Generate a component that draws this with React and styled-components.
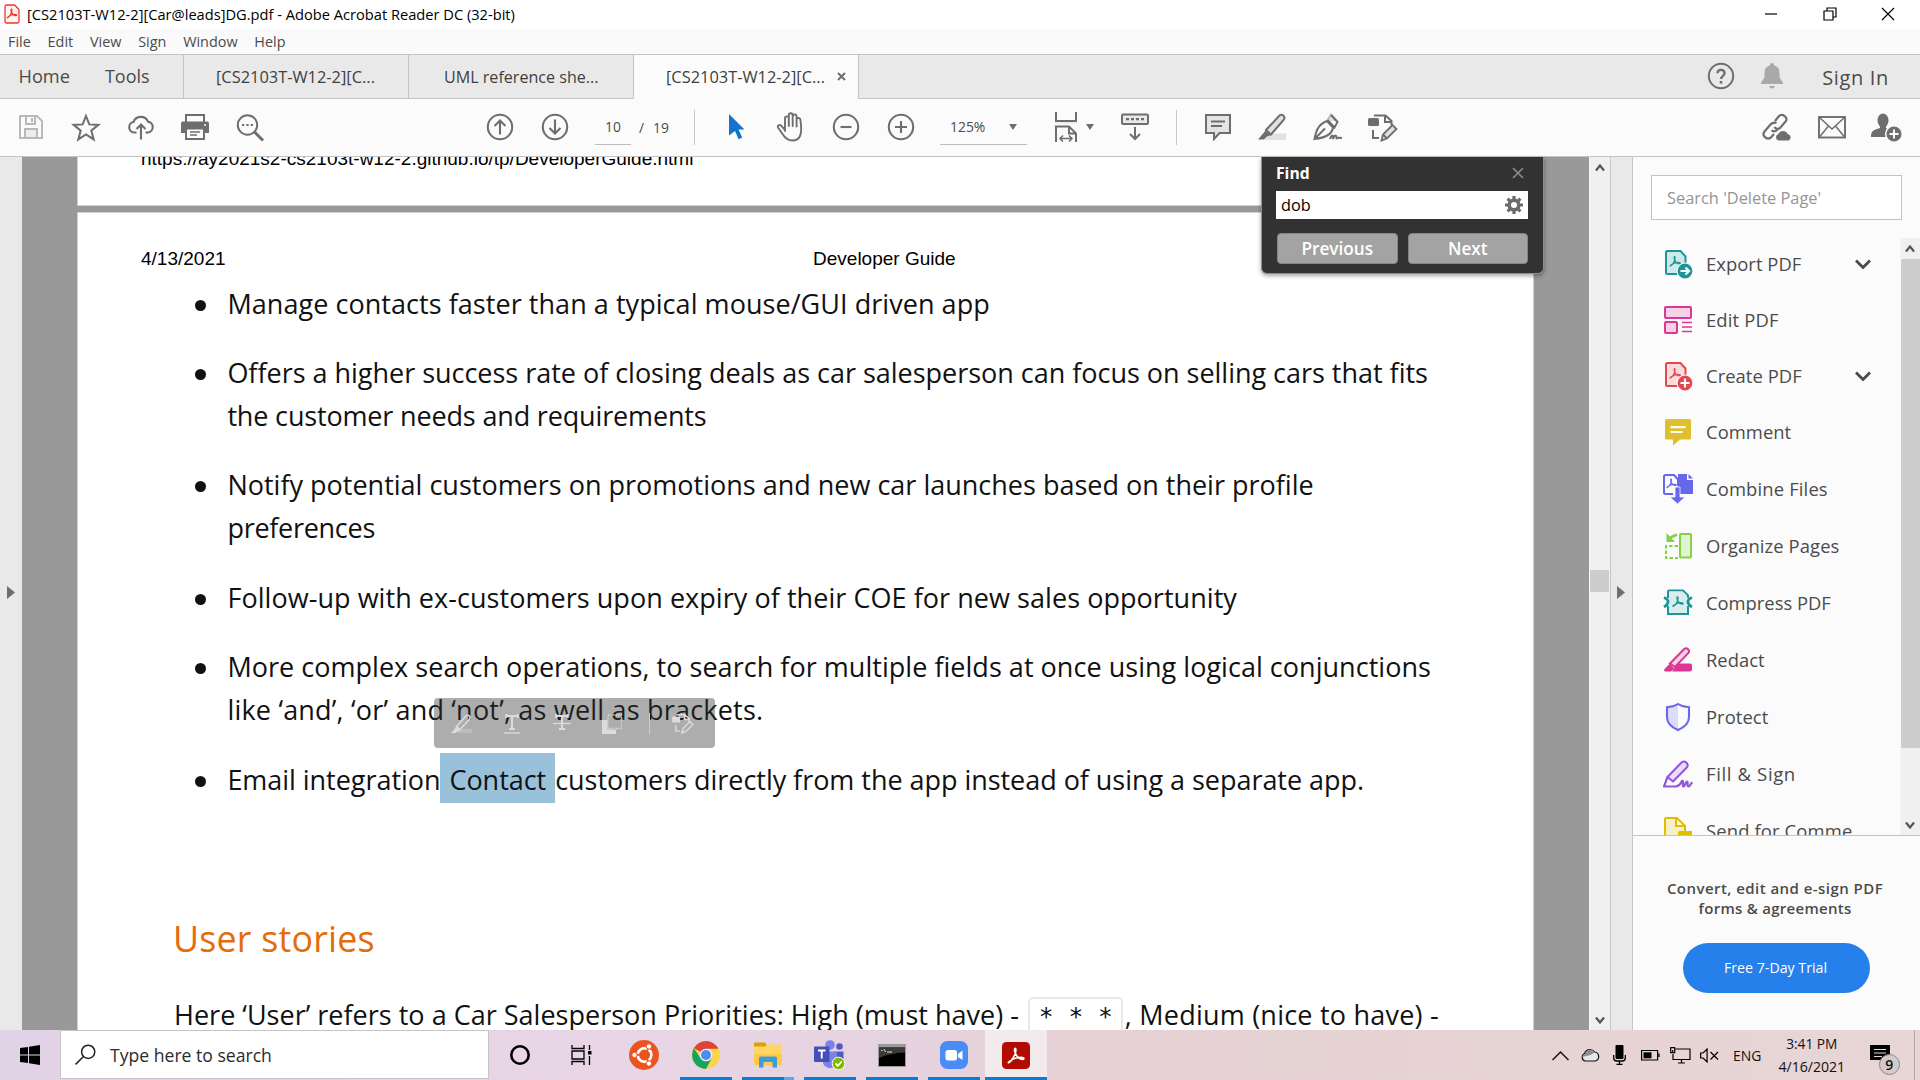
import React from "react";
import styled, { createGlobalStyle } from "styled-components";

const GlobalStyle = createGlobalStyle`
  *, *::before, *::after { box-sizing: border-box; }
  body { margin: 0; overflow: hidden; background: #fff; font-family: "Open Sans", "Noto Sans", sans-serif; color: #4b4b4b; }
  svg { display: block; flex: none; }
`;

const ink = "#6e6e6e";

const Screen = styled.div`
  width: 1920px;
  height: 1080px;
  display: flex;
  flex-direction: column;
  overflow: hidden;
`;

const Label = styled.span`
  font-size: ${(p) => p.$size}px;
  letter-spacing: ${(p) => p.$ls || 0}px;
  font-weight: ${(p) => p.$weight || 400};
  white-space: pre;
`;

/* ---------- title bar + menus ---------- */
const TitleBar = styled.header`
  height: 29px;
  flex: none;
  display: flex;
  align-items: center;
  padding: 0 25px 2px 4px;
  gap: 7px;
  background: #fff;
  color: #000;
`;
const WindowButtons = styled.div`
  margin-left: auto;
  display: flex;
  gap: 44.4px;
`;
const MenuBar = styled.nav`
  height: 26px;
  flex: none;
  display: flex;
  align-items: center;
  gap: 16.8px;
  padding: 1px 0 0 8px;
  background: #fafafa;
  border-bottom: 1px solid #c3c3c3;
  line-height: 20px;
`;

/* ---------- tabs ---------- */
const TabBar = styled.div`
  height: 44px;
  flex: none;
  display: flex;
  background: #e9e9e9;
`;
const HomeTabs = styled.div`
  width: 183px;
  display: flex;
  align-items: center;
  gap: 35px;
  padding: 0 0 2px 18.5px;
  border-bottom: 1px solid #c3c3c3;
`;
const Tab = styled.div`
  width: 225px;
  display: flex;
  align-items: center;
  padding-left: ${(p) => p.$pad}px;
  gap: 12px;
  color: #3f3f3f;
  border-left: 1px solid #c3c3c3;
  border-bottom: 1px solid ${(p) => (p.$active ? "#fbfbfb" : "#c3c3c3")};
  background: ${(p) => (p.$active ? "#fbfbfb" : "transparent")};
`;
const TabRest = styled.div`
  flex: 1;
  display: flex;
  align-items: center;
  justify-content: flex-end;
  padding-right: 31px;
  border-left: 1px solid #c3c3c3;
  border-bottom: 1px solid #c3c3c3;
  & > span { padding-top: 2px; }
`;
const AccountTools = styled.div`
  display: flex;
  align-items: center;
  gap: 26px;
  margin-right: 39px;
  padding-bottom: 1px;
`;

/* ---------- toolbar ---------- */
const Toolbar = styled.div`
  height: 58px;
  flex: none;
  display: flex;
  align-items: center;
  padding: 0 6px 1px 3px;
  background: #fbfbfb;
  border-bottom: 1px solid #c3c3c3;
`;
const ToolGroup = styled.div`
  display: flex;
  margin-left: ${(p) => p.$gap || 0}px;
`;
const Slot = styled.div`
  width: ${(p) => p.$w || 55}px;
  height: 34px;
  display: flex;
  align-items: center;
  justify-content: center;
`;
const Field = styled.div`
  width: ${(p) => p.$w}px;
  height: 36px;
  margin-left: ${(p) => p.$gap}px;
  padding: 0 ${(p) => p.$pad}px;
  display: flex;
  align-items: center;
  justify-content: space-between;
  border-bottom: 1px solid #bdbdbd;
`;
const PageTotal = styled.div`
  width: 63px;
  padding-left: 8px;
  display: flex;
  gap: 9px;
`;
const Divider = styled.div`
  width: 1px;
  height: 35px;
  background: #c8c8c8;
`;
const Spring = styled.div`
  flex: 1;
`;

/* ---------- workspace ---------- */
const Workspace = styled.main`
  height: 873px;
  flex: none;
  display: flex;
  position: relative;
`;
const Rail = styled.div`
  width: ${(p) => p.$w}px;
  flex: none;
  display: flex;
  align-items: center;
  padding: 0 0 2px ${(p) => p.$pad}px;
  background: #e9e9e9;
  border-left: ${(p) => (p.$line ? "1px solid #c6c6c6" : "0")};
`;
const Canvas = styled.section`
  width: 1567px;
  flex: none;
  overflow: hidden;
  padding: 0 55px;
  background: #999;
  display: flex;
  flex-direction: column;
  gap: 6px;
`;
const Sheet = styled.article`
  height: ${(p) => p.$h}px;
  flex: none;
  background: #fff;
  border: solid #cfcfcf;
  border-width: ${(p) => (p.$last ? "0 1px 1px 1px" : "1px 1px 0 1px")};
  color: #111;
  overflow: hidden;
`;
const PrintLine = styled.div`
  font: 19px "Liberation Sans", Arial, sans-serif;
  color: #000;
  line-height: 22px;
  display: flex;
  white-space: pre;
`;
const UrlLine = styled(PrintLine)`
  margin: -9px 0 0 63px;
`;
const DateLine = styled(PrintLine)`
  margin: 35px 0 0 63px;
  gap: 587.5px;
`;
const Bullets = styled.ul`
  list-style: none;
  margin: 12.5px 0 0 116px;
  padding: 0;
  display: flex;
  flex-direction: column;
  gap: 26.9px;
  font-size: 27px;
  line-height: 42.7px;
`;
const Bullet = styled.li`
  display: flex;
  &::before {
    content: "";
    width: 11px;
    height: 11px;
    flex: none;
    margin: 17px 21.4px 0 1px;
    border-radius: 50%;
    background: #111;
  }
`;
const Line = styled.div`
  white-space: pre;
  letter-spacing: ${(p) => p.$ls || 0}px;
`;
const Selected = styled.span`
  background: #99c1da;
  padding: 7.6px 2px 5.6px;
`;
const Heading = styled.h2`
  margin: 112px 0 0 95px;
  font-size: 35.8px;
  font-weight: 400;
  line-height: 50px;
  letter-spacing: 0.2px;
  color: #e46c0a;
`;
const Story = styled.div`
  margin: 30.5px 0 0 96px;
  display: flex;
  font-size: 27px;
  line-height: 42.7px;
`;
const Code = styled.code`
  width: 95px;
  height: 42px;
  margin: 3px 1.5px 0 9.5px;
  flex: none;
  display: flex;
  justify-content: center;
  border: 2px solid #e8e8e8;
  border-radius: 5px;
  font: 24.6px/36px "DejaVu Sans Mono", monospace;
  white-space: pre;
`;

const SelectionBar = styled.div`
  position: absolute;
  left: 434px;
  top: 541px;
  width: 281px;
  height: 50px;
  border-radius: 4px;
  background: rgba(50, 50, 50, 0.4);
  display: grid;
  grid-template-columns: 52px 50px 49px 47px 23px 22px;
  align-items: center;
  padding: 1px 0 0 17px;
`;

const FindBox = styled.div`
  position: absolute;
  left: 1261px;
  top: 0;
  width: 283px;
  height: 117px;
  padding: 0 15px 0 14px;
  background: #323232;
  border: solid #8f8f8f;
  border-width: 0 1px 1px;
  border-radius: 0 0 6px 6px;
  box-shadow: 0 2px 4px rgba(0, 0, 0, 0.35);
  color: #fff;
`;
const FindHead = styled.div`
  height: 34px;
  padding: 0 4px 2px 0;
  display: flex;
  align-items: center;
  justify-content: space-between;
`;
const FindInput = styled.div`
  height: 28px;
  padding: 0 5px;
  display: flex;
  align-items: center;
  justify-content: space-between;
  background: #fff;
  color: #000;
`;
const FindActions = styled.div`
  margin: 14px 0 0 1px;
  display: flex;
  gap: 10px;
`;
const FindButton = styled.button`
  flex: 1;
  height: 31px;
  padding: 0 0 1px;
  border: 1px solid #858585;
  border-radius: 4px;
  background: #a3a3a3;
  color: #fff;
  font: 600 17.2px "Open Sans", sans-serif;
`;

const ScrollTrack = styled.div`
  width: ${(p) => p.$w}px;
  flex: none;
  background: #f0f0f0;
  display: flex;
  flex-direction: column;
  align-items: center;
  padding-right: 1px;
  border-left: 1px solid #f8f8f8;
`;
const Arrow = styled.div`
  height: 21px;
  display: flex;
  align-items: center;
`;
const Thumb = styled.div`
  width: 19px;
  height: ${(p) => p.$h}px;
  margin: ${(p) => p.$top}px 0 auto;
  background: #cdcdcd;
`;

/* ---------- tools panel ---------- */
const Panel = styled.aside`
  flex: 1;
  display: flex;
  flex-direction: column;
  background: #fbfbfb;
  border-left: 1px solid #c6c6c6;
`;
const SearchTools = styled.div`
  width: 251px;
  height: 45px;
  flex: none;
  margin: 18px 0 18px 18px;
  padding: 0 0 1px 15px;
  display: flex;
  align-items: center;
  background: #fff;
  border: 1px solid #c3c3c3;
  color: #959595;
`;
const ToolArea = styled.div`
  height: 598px;
  flex: none;
  display: flex;
  justify-content: space-between;
  overflow: hidden;
  border-bottom: 1px solid #c3c3c3;
`;
const ToolList = styled.div`
  padding-left: 18px;
`;
const ToolRow = styled.div`
  width: 230px;
  height: 51px;
  margin-bottom: ${(p) => p.$after}px;
  padding: 0 10px 0 12px;
  display: flex;
  align-items: center;
  gap: 13px;
  background: ${(p) => (p.$open ? "#fcfcfc" : "transparent")};
  & > :nth-child(3) { margin-left: auto; }
`;
const IconBox = styled.div`
  width: 30px;
  display: flex;
  justify-content: center;
`;
const Promo = styled.div`
  flex: 1;
  display: flex;
  flex-direction: column;
  align-items: center;
  padding: 42px 3px 0 0;
  line-height: 20.4px;
`;
const TrialButton = styled.button`
  width: 187px;
  height: 50px;
  margin: 24px -3px 0 0;
  padding: 0 2px 0 0;
  border: 0;
  border-radius: 25px;
  background: #2680eb;
  color: #fff;
  font: 14.2px "Open Sans", sans-serif;
`;

/* ---------- taskbar ---------- */
const Taskbar = styled.footer`
  height: 50px;
  flex: none;
  display: flex;
  color: #111;
  background: linear-gradient(90deg, #e1d2e5 0%, #e8d6e7 30%, #e6d3e0 47%, #e5d1d3 56%, #e8d5d5 100%);
`;
const Start = styled.div`
  width: 60px;
  display: flex;
  align-items: center;
  justify-content: center;
`;
const SearchBox = styled.div`
  width: 429px;
  height: 49px;
  margin-top: 0;
  padding-left: 14px;
  display: flex;
  align-items: center;
  gap: 14px;
  background: #fff;
  border: 1px solid #c5c5c5;
  color: #2b2b2b;
`;
const TaskItem = styled.div`
  width: 62px;
  display: flex;
  align-items: center;
  justify-content: center;
  position: relative;
  background: ${(p) => (p.$active ? "#f3eaee" : "transparent")};
  &::after {
    content: "";
    position: absolute;
    left: ${(p) => (p.$active ? 0 : 5)}px;
    bottom: 0;
    width: ${(p) => (p.$active ? 62 : 52)}px;
    height: ${(p) => (p.$run ? 3 : 0)}px;
    background: ${(p) => (p.$multi ? "linear-gradient(90deg,#0a7bd6 0 80%,#5aa9e2 80%)" : "#0a7bd6")};
  }
`;
const Tray = styled.div`
  margin-left: auto;
  width: 368px;
  display: flex;
  align-items: center;
`;
const TrayIcon = styled.div`
  width: ${(p) => p.$w}px;
  display: flex;
  justify-content: center;
`;
const Clock = styled.div`
  width: 72px;
  margin-left: 14.5px;
  display: flex;
  flex-direction: column;
  align-items: center;
  line-height: 23px;
  padding-bottom: 1px;
`;
const Notice = styled.div`
  width: 32px;
  height: 50px;
  margin-left: 22px;
  padding: 15px 0 0 0;
  position: relative;
`;
const Badge = styled.span`
  position: absolute;
  left: 9px;
  top: 24px;
  width: 21px;
  height: 21px;
  border-radius: 50%;
  border: 1px solid #8d8686;
  background: #d3cbcb;
  display: flex;
  align-items: center;
  justify-content: center;
  font-size: 14px;
  font-weight: 600;
  line-height: 1;
`;
const ShowDesktop = styled.div`
  width: 1px;
  height: 50px;
  margin: 0 5px 0 auto;
  background: #b3a5a6;
`;

/* ---------- icons ---------- */
const Svg = ({ w, h, c = ink, sw = 2, children, ...rest }) => (
  <svg width={w} height={h} viewBox={`0 0 ${w} ${h}`} fill="none" stroke={c} strokeWidth={sw} {...rest}>
    {children}
  </svg>
);

const trefoil =
  "M1 13.2C3.5 12 6.300 7.200 7.100 3.800 7.500 2 7.300 .8 6.700 .8 6 .8 5.900 2.400 6.500 4.200 7.600 7.500 10.300 10 13 10.300 14.600 10.400 14.700 9 13.200 8.700 9.500 8.200 4.500 9.900 1.800 12 .8 12.900 .4 13.500 1 13.200Z";

const Chevron = ({ w = 11, h = 8, sw = 2.2, up, c = "#555" }) => (
  <Svg w={w} h={h} sw={sw} c={c}>
    <path d={up ? `M1 ${h - 1.5}L${w / 2} 1.500L${w - 1} ${h - 1.5}` : `M1 1.500L${w / 2} ${h - 1.5}L${w - 1} 1.500`} />
  </Svg>
);
const Caret = () => (
  <Svg w={8} h={6} stroke="none"><path d="M0 0h8l-4 6z" fill={ink} /></Svg>
);

const AppMark = () => (
  <Svg w={16} h={20} c="#e8382f" sw={1.3}>
    <path d="M2.500 1h8L15 5.500V17.500Q15 19 13.500 19h-11Q1 19 1 17.500V2.500Q1 1 2.500 1Z" fill="#fff3f2" />
    <g transform="translate(2.800 4.500) scale(.7)"><path d={trefoil} strokeWidth="1.800" /></g>
  </Svg>
);

const Save = () => (
  <Svg w={26} h={26} c="#b9b9b9">
    <path d="M2 2h17l5 5v17H2zM8 2v8h9V2M14 4v4M7 24v-9h12v9" fill="none" />
    <path d="M8 16h10v7H8z" fill="#ececec" stroke="none" />
  </Svg>
);
const Star = () => (
  <Svg w={30} h={29}><path d="M15 3l3.300 8.400 9 .5-7 5.700 2.400 8.800L15 21.500l-7.700 4.900 2.400-8.800-7-5.700 9-.5z" /></Svg>
);
const CloudUp = () => (
  <Svg w={28} h={28} sw={2.1}>
    <path d="M9.500 19.500H7.200A5.300 5.300 0 0 1 6.500 9 7.800 7.800 0 0 1 21 8.600a5.500 5.500 0 0 1 0 10.900h-2.500M14 26.500V12M9.500 16L14 11.500 18.500 16" />
  </Svg>
);
const Printer = () => (
  <Svg w={28} h={28}>
    <path d="M5 9V2h18v7" />
    <path d="M2 8.500h24a2 2 0 0 1 2 2V20h-4v-3H4v3H0v-9.500a2 2 0 0 1 2-2z" fill={ink} stroke="none" />
    <path d="M5 15.500h18V26H5z" fill="#fbfbfb" />
    <path d="M9 19h10M9 22h7" strokeWidth="1.500" />
    <circle cx="24" cy="12" r="1" fill="#fff" stroke="none" />
  </Svg>
);
const FindIcon = () => (
  <Svg w={29} h={29}>
    <circle cx="11.500" cy="12" r="9.700" /><path d="M18.500 19L27 27.500" strokeWidth="3" />
    <path d="M6 12h2.200M10.400 12h2.200M14.800 12H17" strokeWidth="2.200" />
  </Svg>
);
const Circle = ({ d }) => (
  <Svg w={28} h={28} sw={2.1}><circle cx="14" cy="14" r="12.200" /><path d={d} /></Svg>
);
const Cursor = () => (
  <Svg w={17} h={26} stroke="none"><path d="M1 0L16.500 15.500H10.500L14.200 23.500 10.600 25.300 7 17 1 21.500Z" fill="#1473cc" /></Svg>
);
const Hand = () => (
  <Svg w={30} h={30} sw={1.900} strokeLinecap="round" strokeLinejoin="round">
    <path d="M9 19V6.300a1.900 1.900 0 0 1 3.800 0V14M12.800 6V3.200a1.900 1.900 0 0 1 3.900 0V14M16.700 4.500a1.900 1.900 0 0 1 3.900 0V14.500M20.600 8a1.900 1.900 0 0 1 3.800-.3C25 14 26.300 18.500 24 24 22.500 27.300 20 28.500 16.500 28.500 11.500 28.500 9 26 6.500 22L2.200 15.800C1 13.600 3.500 12 5.400 13.800L9 18" />
  </Svg>
);
const FitPage = () => (
  <Svg w={22} h={30} sw={2}>
    <path d="M1 0v9h20V0" />
    <path d="M0 11h22" stroke="#e1e1e1" strokeWidth="1" />
    <path d="M1 30V14.500h13l7 7V30M14 14.500v7h7" />
    <path d="M5 26.500h12M8 23.500l-3 3 3 3M14 23.500l3 3-3 3" strokeWidth="1.500" />
  </Svg>
);
const Keyboard = () => (
  <Svg w={28} h={28}>
    <rect x="1" y="1.500" width="26" height="9.500" rx="1" fill="#e9e9e9" />
    <path d="M5 6.200h3M10 6.200h3M15 6.200h3M20 6.200h3" strokeWidth="2.200" />
    <path d="M14 14v12M9 21l5 5 5-5" />
  </Svg>
);
const Note = () => (
  <Svg w={28} h={28}><path d="M2 2h24v18H15.500L10 26v-6H2z" fill="#e4e4e4" /><path d="M7 8.500h14M7 13h11" strokeWidth="1.800" /></Svg>
);
const Marker = ({ c = ink, f = "#e1e1e1" }) => (
  <Svg w={29} h={28} c={c}>
    <path d="M11 20.500h17V27H7z" fill={f} stroke="none" />
    <path d="M8 17L21.500 2.500q2-1.500 4 .2 1.800 1.800.3 4L13 21.500z" fill={f} />
    <path d="M7.500 17.500l5.500 4.500-4 1.500-3 3H0L5.500 20z" fill={c} stroke="none" />
  </Svg>
);
const Pen = () => (
  <Svg w={30} h={28} sw={2}>
    <path d="M14 8l4-6.500L24 8" fill="#e1e1e1" stroke="#bdbdbd" />
    <path d="M1.500 26C3 19 4 12 14 8l6 6.500C19 22 11 25 1.500 26zM2 25.500L12 15.500M14.500 7l7 7.500 3-5.500L18 2" />
    <path d="M17 26c2-5 3.500-4 3 0 2-5 4-4 3.500 0 1.500-2.500 2.500-1 5.500-1" />
  </Svg>
);
const Stamp = ({ c = ink, f = "#e1e1e1" }) => (
  <Svg w={30} h={29} c={c}>
    <path d="M6 2.500h11.500l6 5.500v4M17 2.500V9h6" />
    <rect x="0" y="5" width="11" height="8" rx="1.500" fill={c} stroke="none" />
    <path d="M5 17v8h6" />
    <path d="M13.500 27.500l1.500-6L24.500 12l4 4L19 25.500zM15 21.500l4 4" fill={f} strokeWidth="1.800" />
  </Svg>
);
const LinkCloud = () => (
  <Svg w={30} h={29} sw={2.2}>
    <path d="M13 8l4-5c3-3 9 1 7 5l-5.500 6.500c-2 2.200-5 1.500-6-.5M14.500 10c-3-1-4.500 0-6 1.500L2.500 18.500c-3 4 2 9 6.500 6l3-3.500M9.500 17.500c3 1.500 5 .5 6-1" />
    <path d="M16 28a4 4 0 0 1 0-7.500 5.500 5.500 0 0 1 10 0A4 4 0 0 1 27 28z" fill={ink} stroke="#fbfbfb" strokeWidth="1.200" />
  </Svg>
);
const Mail = () => (
  <Svg w={28} h={23} sw={1.900}><rect x="1" y="1" width="26" height="20.500" /><path d="M1.500 1.500L14 13 26.500 1.500M1.500 21L10.500 10M26.500 21L17.500 10" strokeWidth="1.500" /></Svg>
);
const UserAdd = () => (
  <Svg w={31} h={29} stroke="none">
    <ellipse cx="12" cy="7.500" rx="5.500" ry="7" fill={ink} />
    <path d="M9 11h6v4c3 1.200 6 2 6 4l-2 5H0c0-6 2-7 9-9z" fill={ink} />
    <circle cx="23" cy="21" r="8.300" fill={ink} stroke="#fbfbfb" strokeWidth="1.500" />
    <path d="M23 16.500v9M18.500 21h9" stroke="#fff" strokeWidth="1.900" />
  </Svg>
);
const Help = () => (
  <Svg w={28} h={28}><circle cx="14" cy="14" r="12.200" />
    <path d="M10.500 11.200c0-4.500 7-4.500 7 0 0 2.500-3.400 2.800-3.400 5.800" strokeWidth="2.300" /><path d="M14 19v2.600" strokeWidth="2.500" /></Svg>
);
const Bell = () => (
  <Svg w={22} h={26} stroke="none"><path d="M11 0q2 0 2.200 2.400C19 4 18.500 9 18.500 13c.3 4 3.500 4.500 3.500 8H0c0-3.500 3.200-4 3.500-8 0-4-.5-9 5.300-10.600Q9 0 11 0zM8 23h6q-1 2.500-3 2.500T8 23z" fill="#a9a9a9" /></Svg>
);
const Gear = () => (
  <Svg w={18} h={18} c="#6b6b6b">
    <circle cx="9" cy="9" r="4.800" strokeWidth="3.600" />
    <path d="M9 0v3M9 15v3M0 9h3M15 9h3M2.600 2.600l2.200 2.200M13.200 13.200l2.200 2.200M2.600 15.400l2.200-2.200M13.200 4.800l2.200-2.200" strokeWidth="3.200" />
  </Svg>
);
const Cross = ({ s = 10, sw = 2, c = ink }) => (
  <Svg w={s} h={s} sw={sw} c={c}><path d={`M1 1L${s - 1} ${s - 1}M${s - 1} 1L1 ${s - 1}`} /></Svg>
);

const PdfDoc = ({ c, f, mark }) => (
  <Svg w={30} h={30} c={c}>
    <path d="M4.500 2h13l5 5.500V25h-18Q3 25 3 23.500v-20Q3 2 4.500 2Z" fill={f} />
    <g transform="translate(6.500 7) scale(.76)"><path d={trefoil} strokeWidth="1.700" /></g>
    <circle cx="22" cy="22" r="8" fill={c} stroke="#fbfbfb" strokeWidth="1.200" />
    <path d={mark} stroke="#fff" strokeWidth="2.200" />
  </Svg>
);
const icons = {
  export: <PdfDoc c="#1b959a" f="#cfe8e9" mark="M17.500 22h7.500M22.500 18.500L26 22l-3.500 3.500" />,
  edit: (
    <Svg w={28} h={28} c="#dc3593">
      <rect x="1" y="1" width="26" height="11" rx="1" fill="#f5d2e6" /><rect x="1" y="16" width="12" height="11" rx="1" fill="#f5d2e6" />
      <path d="M18 16.500h10M18 21h10M18 25.500h10" strokeWidth="1.300" />
    </Svg>
  ),
  create: <PdfDoc c="#e34850" f="#f9dcdf" mark="M17.500 22h9M22 17.500v9" />,
  comment: (
    <Svg w={26} h={28} stroke="none">
      <path d="M2 1h22q2 0 2 2v17q0 1.500-2 1.500H15L8 27.500v-6H2q-2 0-2-1.500V3q0-2 2-2z" fill="#dfbf2b" />
      <path d="M5.500 9.200h15M5.500 14h12" stroke="#fff" strokeWidth="2.200" />
    </Svg>
  ),
  combine: (
    <Svg w={30} h={30} c="#6767ec">
      <path d="M15 0h9v6h6v14H15z" fill="#6767ec" stroke="none" /><path d="M25.500 0l4.500 4.500h-4.500z" fill="#6767ec" stroke="none" />
      <path d="M10 20H2.500Q1 20 1 18.500v-16Q1 1 2.500 1H11l4 4.500V12" fill="#fbfbfb" />
      <g transform="translate(3.500 4.500) scale(.68)"><path d={trefoil} strokeWidth="1.800" /></g>
      <path d="M12 13h5v10h5l-7.500 7L7 23h5z" fill="#6767ec" stroke="#fbfbfb" strokeWidth=".8" />
    </Svg>
  ),
  organize: (
    <Svg w={28} h={27} c="#83d241">
      <rect x="16" y="2" width="11" height="23.500" rx="1" fill="#e1f3d0" />
      <path d="M14 14H2v12h12" strokeDasharray="3.500 2" /><path d="M13 2.500L6.500 5.500" strokeWidth="2.800" /><path d="M2.500 1v9H11z" fill="#83d241" stroke="none" />
    </Svg>
  ),
  compress: (
    <Svg w={30} h={27} c="#1b959a">
      <path d="M5 9V2.500Q5 1.500 6 1.500h14l5 5V9M5 17v8h20v-8" fill="none" /><path d="M6 2.500h13.500L24 7v17H6z" fill="#d9edee" stroke="none" />
      <g transform="translate(9.500 7.500) scale(.74)"><path d={trefoil} strokeWidth="2" /></g>
      <path d="M1 8.500q4.500 2 4 4.700Q4.500 16 1 18M29 8.500q-4.500 2-4 4.700.500 2.800 4 4.800" strokeWidth="2.800" />
    </Svg>
  ),
  redact: (
    <Svg w={28} h={25} c="#dc3593">
      <path d="M14 16.500h12q2 0 2 1.500v4.500q0 2-2 2H8z" fill="#dc3593" stroke="none" />
      <path d="M6 16.500L20 2.200q2-1.800 4 0t.2 4L11 20z" fill="#f5d2e6" />
      <path d="M5.500 17l5 4.500-3.500 3H1.500Q-.5 24.500.5 22z" fill="#dc3593" stroke="none" />
    </Svg>
  ),
  protect: (
    <Svg w={26} h={30} c="#6767ec" sw={2.1}>
      <path d="M13 3v24C6 24 3 20 3 14V5.500C7 5.500 10 4.500 13 3z" fill="#dcdcf9" stroke="none" />
      <path d="M13 2c3 2 6.500 3 11 3.200V15c0 6-4 10-11 13C6 25 2 21 2 15V5.200C6.500 5 10 4 13 2z" />
    </Svg>
  ),
  sign: (
    <Svg w={30} h={28} c="#9256d9" strokeLinejoin="round">
      <path d="M4.500 17L18.500 2.500q2.500-2 5 .2 2.300 2.500.3 4.800L10 21.500z" fill="#e8dcf6" />
      <path d="M4.500 17L1 26.500h12c5-1 4.500-4 6-5.500 2-1.500 0 5.500 1.500 5.500s2-5 3.500-5-.5 5 1.500 5 1.500-3 4-4" strokeWidth="2.200" />
    </Svg>
  ),
  send: (
    <Svg w={28} h={30} c="#dfbf00">
      <path d="M2 2h11l8 8v18H1V3Q1 2 2 2zM12 2v8h8" fill="#f6efc9" /><path d="M16 15h12v12H14V17q0-2 2-2z" fill="#dfbf00" stroke="none" /><path d="M19 20h7" stroke="#fff" />
    </Svg>
  ),
};

const tools = [
  ["export", "Export PDF", 18.4, 0.05, 5, true],
  ["edit", "Edit PDF", 18.4, 0.15, 5],
  ["create", "Create PDF", 18.4, 0.05, 5, true],
  ["comment", "Comment", 18.4, 0.05, 6],
  ["combine", "Combine Files", 18.4, 0.15, 6],
  ["organize", "Organize Pages", 18.4, 0.1, 6],
  ["compress", "Compress PDF", 18.4, -0.02, 6],
  ["redact", "Redact", 18.4, 0, 6],
  ["protect", "Protect", 18.4, 0.05, 6],
  ["sign", "Fill & Sign", 18.6, 0.6, 6],
  ["send", "Send for Comme", 18.4, 0.15, 6],
];

/* ---------- taskbar art ---------- */
const Windows = () => (
  <Svg w={20} h={20} stroke="none"><path d="M0 3l8-1v7.500H0zM9 1.800L20 0v9.500H9zM0 10.500h8V18l-8-1zM9 10.500h11V20L9 18.200z" fill="#000" /></Svg>
);
const Lens = () => (
  <Svg w={21} h={21} c="#222" sw={1.500}><circle cx="13.200" cy="7.800" r="6.600" /><path d="M8.500 12.500L.6 20.400" /></Svg>
);
const Ring = () => <Svg w={22} h={22} c="#000" sw={2.600}><circle cx="11" cy="11" r="8.700" /></Svg>;
const TaskView = () => (
  <Svg w={22} h={20} c="#000" sw={1.300}><path d="M1 0v3.500h12V0M1 6h12v8H1zM1 20v-3.500h12V20M18.500 0v5M18.500 11v9" /><path d="M17 6h3.500v3.500H17z" fill="#000" stroke="none" /></Svg>
);
const Ubuntu = () => (
  <Svg w={30} h={30} c="#fff" sw={2.700}>
    <circle cx="15" cy="15" r="15" fill="#e95420" stroke="none" /><circle cx="15.500" cy="15" r="6.800" strokeDasharray="12.200 2" strokeDashoffset="-1" transform="rotate(-60 15.500 15)" />
    <g fill="#fff" stroke="#e95420" strokeWidth="1"><circle cx="5.500" cy="15" r="2.700" /><circle cx="20" cy="6.500" r="2.700" /><circle cx="20" cy="23.500" r="2.700" /></g>
  </Svg>
);
const Chrome = () => (
  <Svg w={28} h={28} stroke="none">
    <circle cx="14" cy="14" r="14" fill="#fdd34b" />
    <path d="M14 14L1.900 7A14 14 0 0 1 26.100 7L26.100 7.800H14z" fill="#db4437" />
    <path d="M1.900 7A14 14 0 0 0 14 28l5.500-10.500L14 14 8.500 17.200z" fill="#1aa260" />
    <circle cx="14" cy="14" r="6.300" fill="#f1f1f1" /><circle cx="14" cy="14" r="5" fill="#4c8bf5" />
  </Svg>
);
const Folder = () => (
  <Svg w={28} h={26} stroke="none">
    <path d="M0 1.500Q0 .5 1 .5h10l2 3-3 3H0z" fill="#e0a000" /><path d="M0 4.500h11l2-2h14.500V22H0z" fill="#ffd566" /><path d="M0 12h28v11H0z" fill="#ffcb45" />
    <path d="M5 25.500V16q0-1.500 1.500-1.500h15q1.500 0 1.500 1.500v9.500h-4.500V20h-9v5.500z" fill="#3f9bdc" />
  </Svg>
);
const Teams = () => (
  <Svg w={32} h={30} stroke="none">
    <circle cx="16" cy="5" r="4.800" fill="#7b83eb" /><circle cx="25.500" cy="6.500" r="3.300" fill="#5059c9" />
    <path d="M20 11.500h9.500v9q-2 5-8 3z" fill="#5059c9" /><path d="M9 11.500h14v11q-2 6-8 5.500-5-1-6-5z" fill="#7b83eb" />
    <rect x="0" y="6.500" width="15.500" height="15.500" rx="1" fill="#464eb8" /><path d="M4 10.500h7.500M7.750 10.500v8" stroke="#fff" strokeWidth="1.900" />
    <circle cx="24.500" cy="23.500" r="6.300" fill="#7fba00" stroke="#fff" strokeWidth="1" /><path d="M21.500 23.500l2.300 2.300 4-4.300" fill="none" stroke="#fff" strokeWidth="1.800" />
  </Svg>
);
const Cmd = () => (
  <Svg w={28} h={23} stroke="none">
    <rect width="28" height="23" fill="#9b9b9b" /><path d="M1 3.500h26V22H1z" fill="#000" /><path d="M1 3.500h26v5Q12 9 1 14z" fill="#3a3a3a" /><path d="M3 6.500h1.500M6 5l1.500 3M9 8h5" stroke="#ddd" strokeWidth="1" />
  </Svg>
);
const ZoomApp = () => (
  <Svg w={28} h={28} stroke="none"><rect width="28" height="28" rx="7.500" fill="#4a8cf7" /><rect x="5.500" y="9" width="11.500" height="10.500" rx="2.500" fill="#fff" /><path d="M18 13l4.500-3.500v9.500L18 16z" fill="#fff" /></Svg>
);
const Acrobat = () => (
  <Svg w={28} h={27} stroke="none"><rect width="28" height="27" rx="4.500" fill="#b30b00" />
    <g transform="translate(5.500 5.500) scale(1.150)"><path d={trefoil} fill="none" stroke="#fff" strokeWidth="1.400" /></g></Svg>
);

const underlineT = "M3 2h12M9 2v13M6 15h6M3.200 0v4M14.800 0v4";

export default function App() {
  return (
    <Screen>
      <GlobalStyle />
      <TitleBar>
        <AppMark />
        <Label $size={14.65}>[CS2103T-W12-2][Car@leads]DG.pdf - Adobe Acrobat Reader DC (32-bit)</Label>
        <WindowButtons>
          <Svg w={14} h={14} c="#000" sw={1.200}><path d="M1 7h12" /></Svg>
          <Svg w={14} h={14} c="#000" sw={1.200}><path d="M1 4h9v9H1zM4 4V1h9v9h-3" /></Svg>
          <Svg w={14} h={14} c="#000" sw={1.200}><path d="M1 1l12 12M13 1L1 13" /></Svg>
        </WindowButtons>
      </TitleBar>
      <MenuBar>
        {["File", "Edit", "View", "Sign", "Window", "Help"].map((m) => (
          <Label key={m} $size={14.4}>{m}</Label>
        ))}
      </MenuBar>

      <TabBar>
        <HomeTabs>
          <Label $size={18.2}>Home</Label>
          <Label $size={18}>Tools</Label>
        </HomeTabs>
        <Tab $pad={32}><Label $size={16.4}>[CS2103T-W12-2][C...</Label></Tab>
        <Tab $pad={35}><Label $size={16.1}>UML reference she...</Label></Tab>
        <Tab $active $pad={32}><Label $size={16.4}>[CS2103T-W12-2][C...</Label><Cross s={9} /></Tab>
        <TabRest>
          <AccountTools><Help /><Bell /></AccountTools>
          <Label $size={20} $ls={0.65}>Sign In</Label>
        </TabRest>
      </TabBar>

      <Toolbar>
        <ToolGroup>
          <Slot><Save /></Slot><Slot><Star /></Slot><Slot><CloudUp /></Slot><Slot $w={54}><Printer /></Slot><Slot $w={57}><FindIcon /></Slot>
        </ToolGroup>
        <ToolGroup $gap={193.5}>
          <Slot><Circle d="M14 21.500V8M8.500 13L14 7.500 19.500 13" /></Slot>
          <Slot><Circle d="M14 6.500V20M8.500 15L14 20.500 19.500 15" /></Slot>
        </ToolGroup>
        <Field $w={36} $gap={12.5} $pad={10}><Label $size={13.9}>10</Label></Field>
        <PageTotal><Label $size={13.9}>/</Label><Label $size={13.9}>19</Label></PageTotal>
        <Divider />
        <ToolGroup $gap={14}>
          <Slot $w={54.5}><Cursor /></Slot><Slot $w={55}><Hand /></Slot>
          <Slot $w={54.5}><Circle d="M8.500 14h11" /></Slot><Slot $w={55}><Circle d="M8 14h12M14 8v12" /></Slot>
        </ToolGroup>
        <Field $w={87} $gap={12} $pad={10}><Label $size={13.9}>125%</Label><Caret /></Field>
        <ToolGroup $gap={28}>
          <Slot $w={39}><FitPage /><Spring /><Caret /></Slot>
          <Slot $w={82}><Keyboard /></Slot>
        </ToolGroup>
        <Divider />
        <ToolGroup $gap={13}>
          <Slot><Note /></Slot><Slot><Marker /></Slot><Slot><Pen /></Slot><Slot><Stamp /></Slot>
        </ToolGroup>
        <Spring />
        <ToolGroup>
          <Slot><LinkCloud /></Slot><Slot><Mail /></Slot><Slot><UserAdd /></Slot>
        </ToolGroup>
      </Toolbar>

      <Workspace>
        <Rail $w={22} $pad={7}><Svg w={8} h={13} stroke="none"><path d="M0 0l8 6.500-8 6.500z" fill={ink} /></Svg></Rail>
        <Canvas>
          <Sheet $h={49} $last>
            <UrlLine>https://ay2021s2-cs2103t-w12-2.github.io/tp/DeveloperGuide.html</UrlLine>
          </Sheet>
          <Sheet $h={840}>
            <DateLine><span>4/13/2021</span><span>Developer Guide</span></DateLine>
            <Bullets>
              <Bullet><Line $ls={0.05}>Manage contacts faster than a typical mouse/GUI driven app</Line></Bullet>
              <Bullet>
                <div>
                  <Line $ls={-0.02}>Offers a higher success rate of closing deals as car salesperson can focus on selling cars that fits</Line>
                  <Line $ls={-0.16}>the customer needs and requirements</Line>
                </div>
              </Bullet>
              <Bullet>
                <div>
                  <Line>Notify potential customers on promotions and new car launches based on their profile</Line>
                  <Line $ls={-0.28}>preferences</Line>
                </div>
              </Bullet>
              <Bullet><Line $ls={0.05}>Follow-up with ex-customers upon expiry of their COE for new sales opportunity</Line></Bullet>
              <Bullet>
                <div>
                  <Line $ls={0.03}>More complex search operations, to search for multiple fields at once using logical conjunctions</Line>
                  <Line $ls={0.2}>like ‘and’, ‘or’ and ‘not’, as well as brackets.</Line>
                </div>
              </Bullet>
              <Bullet>
                <Line $ls={-0.04}>Email integration<Selected> Contact </Selected>customers directly from the app instead of using a separate app.</Line>
              </Bullet>
            </Bullets>
            <Heading>User stories</Heading>
            <Story>
              <Line $ls={0.01}>Here ‘User’ refers to a Car Salesperson Priorities: High (must have) -</Line>
              <Code>* * *</Code>
              <Line $ls={0.22}>, Medium (nice to have) -</Line>
            </Story>
          </Sheet>
        </Canvas>
        <ScrollTrack $w={21}>
          <Arrow><Chevron up w={10} /></Arrow>
          <Thumb $h={22} $top={392} />
          <Arrow><Chevron w={10} /></Arrow>
        </ScrollTrack>
        <Rail $w={22} $pad={6} $line><Svg w={8} h={13} stroke="none"><path d="M0 0l8 6.500-8 6.500z" fill={ink} /></Svg></Rail>

        <Panel>
          <SearchTools><Label $size={16.4}>Search 'Delete Page'</Label></SearchTools>
          <ToolArea>
            <ToolList>
              {tools.map(([id, name, size, ls, after, open]) => (
                <ToolRow key={id} $after={after} $open={open}>
                  <IconBox>{icons[id]}</IconBox>
                  <Label $size={size} $ls={ls}>{name}</Label>
                  {open && <Chevron w={16} h={10} sw={2.800} c="#4b4b4b" />}
                </ToolRow>
              ))}
            </ToolList>
            <ScrollTrack $w={20}>
              <Arrow><Chevron up w={10} /></Arrow>
              <Thumb $h={489} $top={0} />
              <Arrow><Chevron w={10} /></Arrow>
            </ScrollTrack>
          </ToolArea>
          <Promo>
            <Label $size={15} $ls={0.45} $weight={600}>Convert, edit and e-sign PDF</Label>
            <Label $size={15} $ls={0.27} $weight={600}>forms &amp; agreements</Label>
            <TrialButton>Free 7-Day Trial</TrialButton>
          </Promo>
        </Panel>

        <SelectionBar>
          <Svg w={21} h={20} c="#dcdcdc" sw={1.500}><path d="M9 15h12v4H6z" fill="#bdbdbd" stroke="none" /><path d="M5.500 12.500L15 2q2-1.500 3.500 0 1.200 1.500 0 3.200L9 15.500z" /><path d="M5 12.500l4.500 4-3 1L4.500 19H0l4-4.500z" fill="#dcdcdc" stroke="none" /></Svg>
          <Svg w={18} h={20} c="#dcdcdc"><path d={underlineT} /><path d="M1 19h16" strokeWidth="1.300" /></Svg>
          <Svg w={18} h={20} c="#dcdcdc"><path d={underlineT} /><path d="M0 9.500h18" strokeWidth="1.300" /></Svg>
          <Svg w={20} h={20} c="#dcdcdc" sw={1.300}><path d="M0 6h5.500v9.500H14V20H0z" fill="#dcdcdc" stroke="none" /><rect x="6" y="1" width="13.500" height="13.500" strokeDasharray="1.300 1.300" /></Svg>
          <Svg w={1} h={21} stroke="none"><path d="M0 0h1v21H0z" fill="#cfcfcf" /></Svg>
          <Svg w={22} h={21} viewBox="0 0 30 29" c="#dcdcdc"><path d="M6 2.500h11.500l6 5.500v4M17 2.500V9h6M5 17v8h6M13.500 27.500l1.500-6L24.500 12l4 4L19 25.500z" /><rect y="5" width="11" height="8" fill="#dcdcdc" stroke="none" /></Svg>
        </SelectionBar>

        <FindBox>
          <FindHead><Label $size={15.7} $weight={700}>Find</Label><Cross s={12} sw={1.700} c="#8a8a8a" /></FindHead>
          <FindInput><Label $size={16.3}>dob</Label><Gear /></FindInput>
          <FindActions><FindButton>Previous</FindButton><FindButton>Next</FindButton></FindActions>
        </FindBox>
      </Workspace>

      <Taskbar>
        <Start><Windows /></Start>
        <SearchBox><Lens /><Label $size={17.6}>Type here to search</Label></SearchBox>
        <TaskItem><Ring /></TaskItem>
        <TaskItem><TaskView /></TaskItem>
        <TaskItem><Ubuntu /></TaskItem>
        <TaskItem $run><Chrome /></TaskItem>
        <TaskItem $run $multi><Folder /></TaskItem>
        <TaskItem $run><Teams /></TaskItem>
        <TaskItem $run><Cmd /></TaskItem>
        <TaskItem $run><ZoomApp /></TaskItem>
        <TaskItem $run $active><Acrobat /></TaskItem>
        <Tray>
          <TrayIcon $w={16}><Svg w={17} h={11} c="#111" sw={1.500}><path d="M.5 10L8.500 2l8 8" /></Svg></TrayIcon>
          <TrayIcon $w={44}><Svg w={20} h={14} c="#111" sw={1.200}><path d="M5 13a4 4 0 0 1-.3-7.500A5.500 5.500 0 0 1 14.500 4a4.600 4.600 0 0 1 .8 9z" fill="#e8e8e8" /><path d="M5 6a5 5 0 0 1 9.500-1.500l-4 2.500L2 9q1-3 3-3z" fill="#8e8e8e" stroke="none" /></Svg></TrayIcon>
          <TrayIcon $w={15}><Svg w={13} h={20} c="#000" sw={1.300}><rect x="2.500" y="0" width="8" height="14" rx="1" fill="#000" stroke="none" /><path d="M.7 10v3q0 3 3 3h5.600q3 0 3-3v-3M6.500 16v3M3.500 19.300h6" /></Svg></TrayIcon>
          <TrayIcon $w={47}><Svg w={19} h={12} c="#000" sw={1.200}><path d="M.6 1.500h16V11H.6zM18 4.500v3.500" /><path d="M2.500 3.300h8v6h-8z" fill="#000" stroke="none" /></Svg></TrayIcon>
          <TrayIcon $w={12}><Svg w={21} h={17} c="#000" sw={1.200}><path d="M5.500 2H20v10.500H3V7M11.500 12.500v3M8 16h7M.7.700h4v5h-4zM2.700 3v3" /></Svg></TrayIcon>
          <TrayIcon $w={47}><Svg w={19} h={15} c="#000" sw={1.200}><path d="M.6 5h2.500l4-4v13l-4-4H.6zM10.500 4l7.500 7.500M18 4l-7.500 7.500" /></Svg></TrayIcon>
          <Label $size={13.9}>ENG</Label>
          <Clock><Label $size={13.7}>3:41 PM</Label><Label $size={14.1}>4/16/2021</Label></Clock>
          <Notice>
            <Svg w={20} h={20} stroke="none"><path d="M0 0h20v15h-5v5l-5-5H0z" fill="#000" /><path d="M4 4.500h12M4 8h12M4 11.500h8" stroke="#e8d5d5" strokeWidth="1.200" /></Svg>
            <Badge>9</Badge>
          </Notice>
          <ShowDesktop />
        </Tray>
      </Taskbar>
    </Screen>
  );
}
